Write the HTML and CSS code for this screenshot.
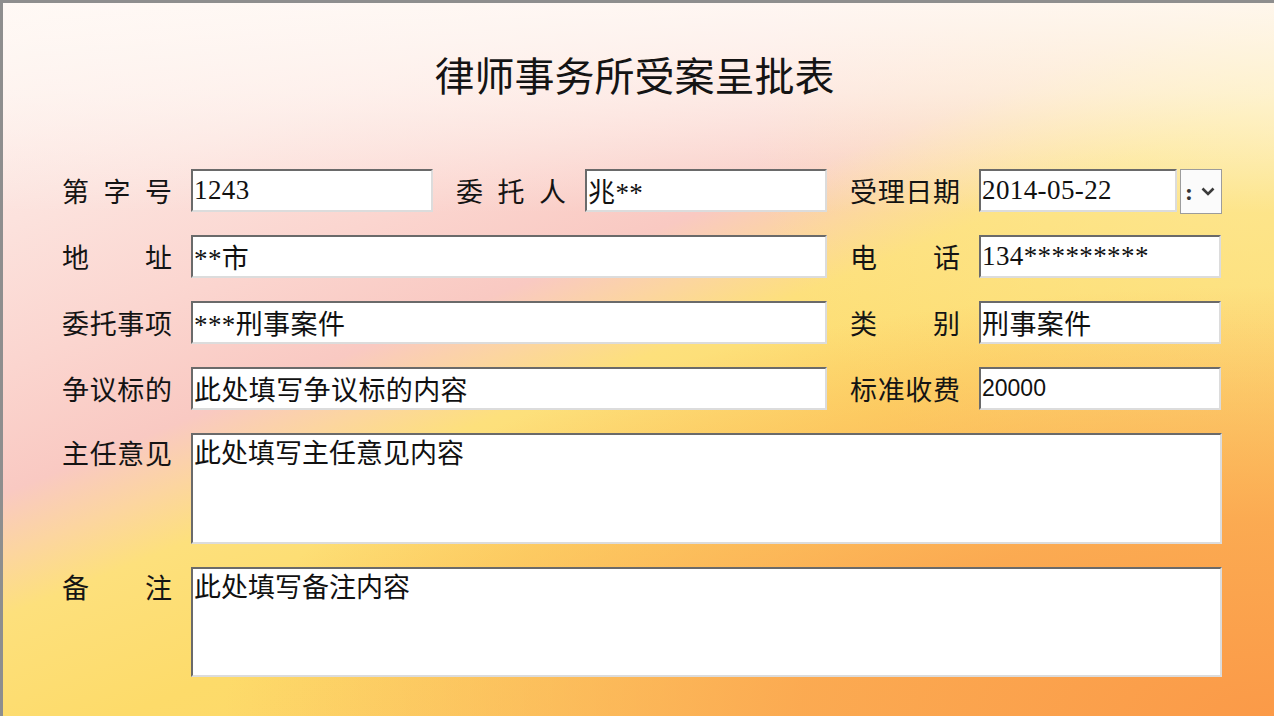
FILE: index.html
```html
<!DOCTYPE html>
<html lang="zh-CN">
<head>
<meta charset="utf-8">
<title>律师事务所受案呈批表</title>
<link rel="stylesheet" href="styles.css">
</head>
<body>
<div class="window">
  <h1 class="title">律师事务所受案呈批表</h1>
  <form class="form">
    <label class="lbl">第 字 号</label>
    <input class="fld gap" type="text" value="1243" readonly>
    <label class="lbl">委 托 人</label>
    <input class="fld gap" type="text" value="兆**" readonly>
    <label class="lbl">受理日期</label>
    <input class="fld date" type="text" value="2014-05-22" readonly>
    <button class="drop" type="button"><span class="colon">:</span><svg width="14" height="9" viewBox="0 0 14 9"><polyline points="1.5,1.5 7,7 12.5,1.5" fill="none" stroke="#3b3b3b" stroke-width="2.6"/></svg></button>

    <label class="lbl">地 址</label>
    <input class="fld gap wide" type="text" value="**市" readonly>
    <label class="lbl">电 话</label>
    <input class="fld right" type="text" value="134*********" readonly>

    <label class="lbl">委托事项</label>
    <input class="fld gap wide" type="text" value="***刑事案件" readonly>
    <label class="lbl">类 别</label>
    <input class="fld right" type="text" value="刑事案件" readonly>

    <label class="lbl">争议标的</label>
    <input class="fld gap wide" type="text" value="此处填写争议标的内容" readonly>
    <label class="lbl">标准收费</label>
    <input class="fld right sans" type="text" value="20000" readonly>

    <label class="lbl top">主任意见</label>
    <textarea class="area" readonly>此处填写主任意见内容</textarea>

    <label class="lbl top">备 注</label>
    <textarea class="area" readonly>此处填写备注内容</textarea>
  </form>
</div>
</body>
</html>
```
FILE: styles.css
```css
html, body {
  margin: 0;
  padding: 0;
  background: #ffffff;
}

.window {
  width: 1271px;
  height: 713px;
  border-top: 3px solid #8e8e8e;
  border-left: 3px solid #8e8e8e;
  overflow: hidden;
  font-family: "Noto Sans CJK SC", "Noto Sans", sans-serif;
  color: #141414;
  background:
    linear-gradient(to bottom, rgba(255, 250, 246, 0.88) 0px, rgba(255, 250, 246, 0.6) 90px, rgba(255, 250, 246, 0) 210px),
    radial-gradient(ellipse 1050px 430px at 100% 100%, rgba(251, 154, 72, 1) 0%, rgba(251, 164, 78, 0.88) 45%, rgba(252, 190, 96, 0) 100%),
    radial-gradient(ellipse 520px 420px at 100% 18%, rgba(253, 232, 150, 0.85), rgba(253, 232, 150, 0) 100%),
    linear-gradient(158deg, #fdf0ec 0%, #fce2dd 18%, #fbd5cf 30%, #f9c9c2 40%, #fcd5a0 45%, #fde07c 50%, #fddb6a 62%, #fcd068 100%);
}

.title {
  margin: 51px 0 0 0;
  padding-right: 8px;
  font-size: 40px;
  line-height: 40px;
  font-weight: 400;
  text-align: center;
}

.form {
  margin: 75px 0 0 59px;
  display: grid;
  grid-template-columns: 129px 265px 129px 265px 129px 201px 42px;
  grid-template-rows: 43px 43px 43px 43px 111px 110px;
  row-gap: 23px;
  align-items: center;
}

.lbl {
  box-sizing: border-box;
  width: 129px;
  padding-right: 19px;
  font-size: 27px;
  line-height: 30px;
  text-align: justify;
  text-align-last: justify;
  white-space: nowrap;
}

.lbl.top {
  align-self: start;
  margin-top: 5px;
}

.fld {
  box-sizing: border-box;
  height: 43px;
  width: 100%;
  margin: 0;
  padding: 0 0 0 1px;
  background: #ffffff;
  border-style: solid;
  border-width: 2px;
  border-color: #6a6a6a #dcdcdc #dcdcdc #6a6a6a;
  font-family: "Liberation Serif", "Noto Sans CJK SC", serif;
  font-size: 27px;
  letter-spacing: 0.4px;
  color: #111111;
  outline: none;
}

.fld.gap {
  width: calc(100% - 23px);
}

.fld.wide {
  grid-column: span 3;
}

.fld.date {
  width: calc(100% - 3px);
}

.fld.right {
  grid-column: span 2;
  width: calc(100% - 1px);
}

.fld.sans {
  font-family: "Liberation Sans", "Noto Sans CJK SC", sans-serif;
  font-size: 23px;
  letter-spacing: 0;
}

.drop {
  box-sizing: border-box;
  width: 42px;
  height: 45px;
  margin: 0;
  padding: 0 0 0 4px;
  align-self: start;
  display: flex;
  align-items: center;
  gap: 8px;
  background: #fbfbfb;
  border: 1px solid #9c9c9c;
}

.colon {
  font-family: "Liberation Serif", serif;
  font-size: 24px;
  line-height: 24px;
  font-weight: 700;
  color: #333333;
}

.area {
  grid-column: span 6;
  box-sizing: border-box;
  width: 100%;
  height: 100%;
  margin: 0;
  padding: 2px 0 0 1px;
  resize: none;
  overflow: hidden;
  background: #ffffff;
  border-style: solid;
  border-width: 2px;
  border-color: #6a6a6a #dcdcdc #dcdcdc #6a6a6a;
  font-family: "Noto Sans CJK SC", "Liberation Serif", sans-serif;
  font-size: 27px;
  line-height: 30px;
  color: #111111;
  outline: none;
}
```
